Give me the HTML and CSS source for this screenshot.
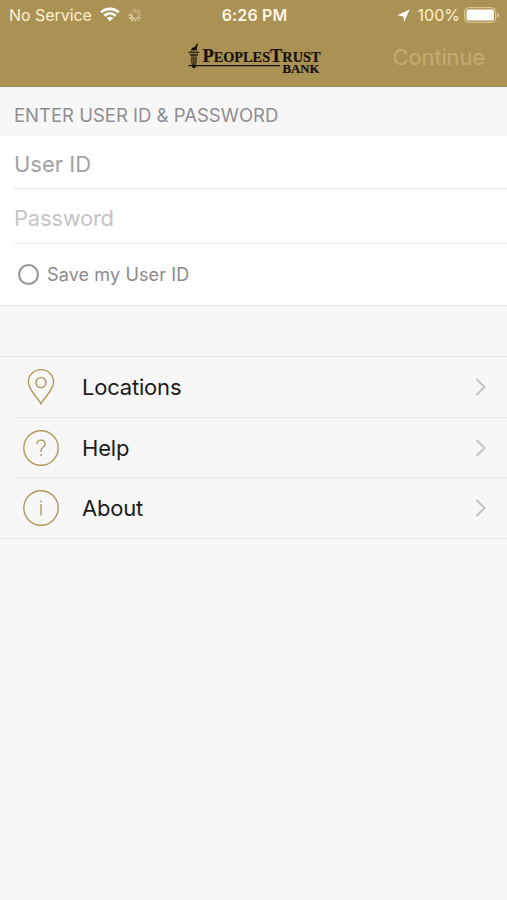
FILE: index.html
```html
<!DOCTYPE html>
<html lang="en">
<head>
<meta charset="utf-8">
<title>PeoplesTrust Bank</title>
<link rel="stylesheet" href="styles.css">
</head>
<body>
<header class="top">
  <div class="status">
    <div class="status-left">
      <span class="carrier">No Service</span>
      <svg class="wifi" width="20" height="15" viewBox="0 0 20 15" fill="none" stroke="#fff" stroke-width="2.7"><path d="M1.2 5.4a12.6 12.6 0 0 1 17.6 0M4.3 8.8a8.1 8.1 0 0 1 11.4 0"/><path d="M10 14.2 6.7 11a4.7 4.7 0 0 1 6.6 0z" fill="#fff" stroke="none"/></svg>
      <svg class="spinner" width="14" height="14" viewBox="0 0 14 14" stroke="#fff0ce" stroke-width="1.2" stroke-linecap="round"><path d="M7 1v3" opacity=".5"/><path d="M10.2 1.5 8.7 4.1M12.5 3.8 9.9 5.3M13 7h-3" opacity=".4"/><path d="m12.5 10.2-2.6-1.5M10.2 12.5 8.7 9.9M7 13v-3" opacity=".65"/><path d="m3.8 12.5 1.5-2.6M1.5 10.2l2.6-1.5M1 7h3"/><path d="m1.5 3.8 2.6 1.5M3.8 1.5l1.5 2.6" opacity=".2"/></svg>
    </div>
    <span class="time">6:26 PM</span>
    <div class="status-right">
      <svg class="arrow" width="13" height="13" viewBox="0 0 13 13" fill="#fff"><path d="M12.7.4 7.2 12.7 6.3 7.5.4 6.3z"/></svg>
      <span class="percent">100%</span>
      <svg class="battery" width="36" height="16" viewBox="0 0 36 16"><rect x=".7" y=".7" width="31" height="14.6" rx="4" fill="none" stroke="#e2d0a2" stroke-width="1"/><rect x="2.5" y="2.5" width="27.5" height="11" rx="2" fill="#fff"/><path d="M33.4 5.4c2.2.8 2.2 4.4 0 5.2z" fill="#e2d0a2"/></svg>
    </div>
  </div>
  <div class="nav">
    <svg class="logo" width="134" height="34" viewBox="0 0 134 34" fill="#17100a">
      <path d="M3.3 9.2C2.6 7 4 5.6 6 5.2 7.8 4.5 7.8 2.5 9.8.7c-.4 1.8.3 2.1-.5 3.5C8.5 5.8 9.3 6.8 8.7 9.2L7.4 7.6 5.7 9.1 4.4 8z"/>
      <path d="M.5 9.5h10.8v1.8H.5zM1.5 12h8.8l-1.1 2.3H2.6z" fill="#3b2f1d"/>
      <path d="M3.3 14.3h5.2l-.7 8.8H4z" fill="#665331"/>
      <path d="M3.2 15v4l1 4M5.9 15v8M8.5 15v4l-1 4" fill="none" stroke="#2b2114" stroke-width=".7"/>
      <circle cx="5.9" cy="24.3" r="1.9"/>
      <path d="M.5 23h91.5v1.2H.5z"/>
      <text class="logo-main" x="14.5" y="20.3" textLength="118" lengthAdjust="spacingAndGlyphs"><tspan class="cap">P</tspan>EOPLES<tspan class="cap">T</tspan>RUST</text>
      <text class="logo-bank" x="94.5" y="30.9" textLength="37" lengthAdjust="spacingAndGlyphs">BANK</text>
    </svg>
    <span class="continue">Continue</span>
  </div>
</header>
<main>
  <h1 class="section-title">ENTER USER ID &amp; PASSWORD</h1>
  <section class="form">
    <div class="field user">User ID</div>
    <div class="field password">Password</div>
    <div class="save"><span class="radio"></span><span class="save-label">Save my User ID</span></div>
  </section>
  <nav class="menu">
    <div class="item">
      <svg class="icon" width="38" height="38" viewBox="0 0 38 38" fill="none" stroke="#ad9a5c" stroke-width="1.4"><path d="M19 35.7C16.2 30 6.4 21.8 6.4 14.2a12.6 12.6 0 0 1 25.2 0C31.6 21.8 21.8 30 19 35.7z"/><circle cx="19" cy="14.6" r="5"/></svg>
      <span class="label locations">Locations</span>
      <svg class="chevron" width="12" height="18" viewBox="0 0 12 18" fill="none" stroke="#c3c3c5" stroke-width="2"><path d="m1.5 1 8 8-8 8"/></svg>
    </div>
    <div class="item">
      <svg class="icon" width="38" height="38" viewBox="0 0 38 38" fill="none" stroke="#ad9a5c" stroke-width="1.4"><circle cx="19" cy="19" r="17.2"/><path d="M14.9 15.2c0-2.6 1.7-4.1 4.1-4.1s4.1 1.5 4.1 3.8c0 3.4-4.1 3.5-4.1 7v.9M19 25v2"/></svg>
      <span class="label help">Help</span>
      <svg class="chevron" width="12" height="18" viewBox="0 0 12 18" fill="none" stroke="#c3c3c5" stroke-width="2"><path d="m1.5 1 8 8-8 8"/></svg>
    </div>
    <div class="item">
      <svg class="icon" width="38" height="38" viewBox="0 0 38 38" fill="none" stroke="#ad9a5c" stroke-width="1.4"><circle cx="19" cy="19" r="17.2"/><path d="M19 15.3v11.2M19 11.5v1.8"/></svg>
      <span class="label about">About</span>
      <svg class="chevron" width="12" height="18" viewBox="0 0 12 18" fill="none" stroke="#c3c3c5" stroke-width="2"><path d="m1.5 1 8 8-8 8"/></svg>
    </div>
  </nav>
</main>
</body>
</html>
```
FILE: styles.css
```css
* { box-sizing: border-box; }
body {
  margin: 0;
  min-height: 900px;
  background: #f7f7f7;
  font-family: Inter, "Liberation Sans", sans-serif;
  white-space: nowrap;
}
.top { height: 87px; background: #aa9255; border-bottom: 1px solid #9d8a59; }
.status {
  display: grid;
  grid-template-columns: 1fr auto 1fr;
  align-items: center;
  height: 30px;
  padding: 0 7px 0 9px;
  color: #fff0ce;
  font-size: 16px;
}
.status-left, .status-right { display: flex; align-items: center; }
.status-right { justify-content: flex-end; }
.carrier { letter-spacing: -0.05px; }
.wifi { margin-left: 8px; margin-top: -2px; }
.spinner { margin-left: 8px; }
.time { color: #fff8e6; font-weight: 600; letter-spacing: 0.15px; }
.percent { margin: 0 4px 0 8px; }
.nav {
  display: grid;
  grid-template-columns: 1fr 134px 1fr;
  height: 56px;
  padding: 0 22px 0 24px;
}
.logo { grid-column: 2; margin-top: 12px; }
.logo-main, .logo-bank { font-family: "Liberation Serif", serif; font-weight: 700; stroke: #17100a; stroke-width: 0.2px; }
.logo-main { font-size: 14px; }
.cap { font-size: 18px; }
.logo-bank { font-size: 11.5px; }
.continue { justify-self: end; color: #c3ac74; font-size: 22px; letter-spacing: -0.15px; line-height: 55px; }
.section-title {
  height: 49px;
  margin: 0;
  padding-left: 14px;
  color: #8e8e91;
  font-size: 18.5px;
  font-weight: 400;
  line-height: 56px;
}
.form { height: 170px; padding-left: 14px; background: #fff; border-bottom: 1px solid #e5e5e5; }
.field { font-size: 22px; border-bottom: 1px solid #e2e2e3; }
.user { height: 53px; line-height: 56px; color: #a2a2a4; }
.password { height: 55px; line-height: 58px; color: #c5c5c8; border-bottom-color: #ededee; letter-spacing: -0.25px; }
.save { display: flex; align-items: center; height: 61px; padding-left: 4px; color: #8b8b8d; font-size: 18px; letter-spacing: 0.13px; }
.radio { width: 21px; height: 21px; border: 2px solid #949496; border-radius: 50%; }
.save-label { margin-left: 8px; }
.menu { margin-top: 50px; border-top: 1px solid #e5e6e6; border-bottom: 1px solid #e5e6e6; }
.item { display: flex; align-items: center; height: 61px; margin-left: 14px; padding: 0 20px 0 8px; border-bottom: 1px solid #e8e9e9; }
.item:nth-child(2) { height: 60px; }
.item:last-child { height: 60px; border-bottom: 0; }
.label { margin-left: 22px; color: #1b1b1c; font-size: 22px; letter-spacing: -0.2px; }
.chevron { margin-left: auto; }
```
